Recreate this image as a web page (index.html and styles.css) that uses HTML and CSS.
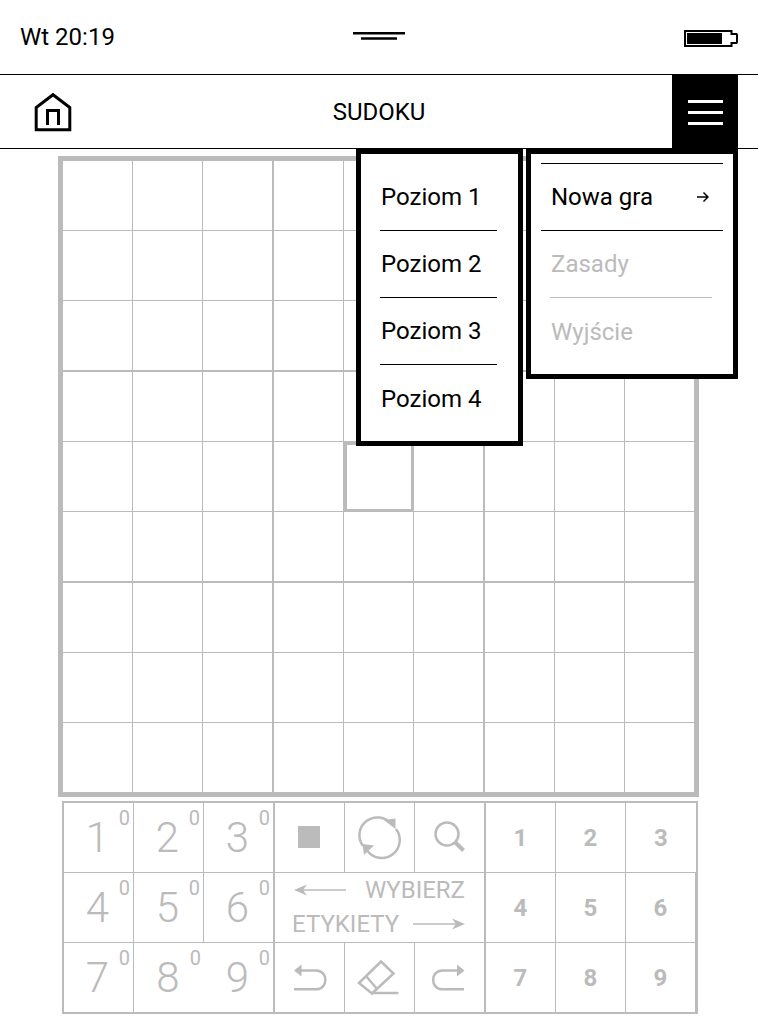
FILE: index.html
```html
<!DOCTYPE html>
<html lang="pl">
<head>
<meta charset="utf-8">
<title>Sudoku</title>
<link rel="stylesheet" href="styles.css">
</head>
<body>
<header class="status">
  <span class="clock">Wt 20:19</span>
  <svg class="grip" viewBox="353 32 52 10"><path d="M353 34.2H405M361 39.5H397"/></svg>
  <svg class="battery" viewBox="684 30 54 17"><path class="batt-line" d="M685 31H731.5V34H736.5L737 35V42L736.5 43H731.5V46H685Z"/><rect class="batt-fill" x="687" y="33" width="35" height="11"/></svg>
</header>
<nav class="nav">
  <svg class="home" viewBox="34 92 38 40"><path d="M36.2 129.8V107.5L53 94.7L69.8 107.5V129.8Z"/><path d="M47.5 125V110.5H58.5V125"/></svg>
  <div class="title">SUDOKU</div>
  <div class="burger"><i></i><i></i><i></i></div>
</nav>
<main class="main">
  <section class="board">
    <div class="c"></div><div class="c"></div><div class="c"></div><div class="c"></div><div class="c"></div><div class="c"></div><div class="c"></div><div class="c"></div><div class="c"></div>
    <div class="c"></div><div class="c"></div><div class="c"></div><div class="c"></div><div class="c"></div><div class="c"></div><div class="c"></div><div class="c"></div><div class="c"></div>
    <div class="c"></div><div class="c"></div><div class="c"></div><div class="c"></div><div class="c"></div><div class="c"></div><div class="c"></div><div class="c"></div><div class="c"></div>
    <div class="c"></div><div class="c"></div><div class="c"></div><div class="c"></div><div class="c"></div><div class="c"></div><div class="c"></div><div class="c"></div><div class="c"></div>
    <div class="c"></div><div class="c"></div><div class="c"></div><div class="c"></div><div class="c sel"></div><div class="c"></div><div class="c"></div><div class="c"></div><div class="c"></div>
    <div class="c"></div><div class="c"></div><div class="c"></div><div class="c"></div><div class="c"></div><div class="c"></div><div class="c"></div><div class="c"></div><div class="c"></div>
    <div class="c"></div><div class="c"></div><div class="c"></div><div class="c"></div><div class="c"></div><div class="c"></div><div class="c"></div><div class="c"></div><div class="c"></div>
    <div class="c"></div><div class="c"></div><div class="c"></div><div class="c"></div><div class="c"></div><div class="c"></div><div class="c"></div><div class="c"></div><div class="c"></div>
    <div class="c"></div><div class="c"></div><div class="c"></div><div class="c"></div><div class="c"></div><div class="c"></div><div class="c"></div><div class="c"></div><div class="c"></div>
  </section>
  <section class="keys">
    <div class="k d">1<sup>0</sup></div><div class="k d">2<sup>0</sup></div><div class="k d g">3<sup>0</sup></div>
    <div class="k"><svg viewBox="275 803 69 69"><rect class="solid" x="298" y="826" width="22" height="22"/></svg></div>
    <div class="k"><svg viewBox="345 803 69 69"><path d="M363 846A17.5 17.5 0 0 1 391.5 824.5M396 829A17.5 17.5 0 0 1 367.5 851"/><path class="solid" d="M384 820L395.500 818.500L395.500 829ZM362.500 844L374 845.500L364 855Z"/></svg></div>
    <div class="k g"><svg viewBox="415 803 69 69"><circle cx="447" cy="834" r="11.500"/><path class="thick" d="M455.500 842.500L463.500 850.500"/></svg></div>
    <div class="k n">1</div><div class="k n">2</div><div class="k n">3</div>

    <div class="k d">4<sup>0</sup></div><div class="k d">5<sup>0</sup></div><div class="k d g">6<sup>0</sup></div>
    <div class="k wide">
      <div class="lab"><svg class="arr" viewBox="0 0 52 12"><path d="M6 6H52"/><path class="solid" d="M0 6L13 0.500L9 6L13 11.500Z"/></svg><span>WYBIERZ</span></div>
      <div class="lab"><span>ETYKIETY</span><svg class="arr" viewBox="0 0 52 12"><path d="M0 6H46"/><path class="solid" d="M52 6L39 0.500L43 6L39 11.500Z"/></svg></div>
    </div>
    <div class="k n">4</div><div class="k n">5</div><div class="k n">6</div>

    <div class="k d">7<sup>0</sup></div><div class="k d">8<sup>0</sup></div><div class="k d g">9<sup>0</sup></div>
    <div class="k"><svg viewBox="275 943 69 69"><path d="M300 970.500H316C328.500 970.500 328.500 989.300 316 989.300H294"/><path class="solid" d="M294 970.500L301.500 964.500V976.500Z"/></svg></div>
    <div class="k"><svg viewBox="345 943 69 69"><path d="M381 961.500L393.500 973.500L372 993.500L359 983Z"/><path d="M366.500 976.500L377 989M372 993H398.500"/></svg></div>
    <div class="k g"><svg viewBox="415 943 69 69"><path d="M458 970.500H442.500C430 970.500 430 989.300 442.500 989.300H464"/><path class="solid" d="M464.500 970.500L457 964.500V976.500Z"/></svg></div>
    <div class="k n">7</div><div class="k n">8</div><div class="k n">9</div>
  </section>
</main>
<div class="menus">
  <ul class="menu levels">
    <li>Poziom 1</li>
    <li>Poziom 2</li>
    <li>Poziom 3</li>
    <li>Poziom 4</li>
  </ul>
  <ul class="menu actions">
    <li class="active">Nowa gra<svg class="sub" viewBox="0 0 12 12"><path d="M0 6H11M6.500 1.500L11 6L6.500 10.500"/></svg></li>
    <li class="off">Zasady</li>
    <li class="off">Wyjście</li>
  </ul>
</div>
</body>
</html>
```
FILE: styles.css
```css
* { box-sizing: border-box; }
html, body { margin: 0; padding: 0; }
body {
  width: 758px;
  height: 1024px;
  position: relative;
  overflow: hidden;
  background: #fff;
  color: #000;
  font-family: Roboto, "Noto Sans", sans-serif;
  font-size: 24px;
}
.status {
  height: 75px;
  border-bottom: 1px solid #000;
  display: grid;
  grid-template-columns: 1fr auto 1fr;
  align-items: center;
  padding: 0 20px;
}
.clock { line-height: 74px; }
.grip { width: 52px; height: 10px; margin-top: -1px; margin-bottom: 1px; }
.grip path { fill: none; stroke: #000; stroke-width: 2.5; }
.battery { width: 54px; height: 17px; justify-self: end; margin-top: 2px; }
.batt-line { fill: none; stroke: #000; stroke-width: 2; }
.batt-fill { fill: #000; }

.nav {
  height: 74px;
  border-bottom: 1px solid #000;
  display: grid;
  grid-template-columns: 1fr auto 1fr;
  align-items: stretch;
}
.home { width: 38px; height: 40px; margin: 17px 0 0 34px; }
.home path { fill: none; stroke: #000; stroke-width: 3; }
.title { line-height: 74px; }
.burger {
  justify-self: end;
  width: 66px;
  height: 74px;
  margin-right: 20px;
  background: #000;
  display: flex;
  flex-direction: column;
  gap: 8px;
  align-items: center;
  padding-top: 25px;
}
.burger i { display: block; width: 35px; height: 3px; background: #fff; }

.main { padding-top: 7px; }
.board {
  margin-left: 58px;
  width: 641px;
  height: 641px;
  border: 5px solid #bbb;
  display: grid;
  grid-template-columns: 70px 70px 71px 70px 70px 71px 70px 70px 69px;
  grid-template-rows: 70px 70px 71px 70px 70px 71px 70px 70px 69px;
}
.c { border-right: 1px solid #bbb; border-bottom: 1px solid #bbb; }
.c:nth-child(3n) { border-right-width: 2px; }
.c:nth-child(9n) { border-right: 0; }
.c:nth-child(n+19):nth-child(-n+27),
.c:nth-child(n+46):nth-child(-n+54) { border-bottom-width: 2px; }
.c:nth-child(n+73) { border-bottom: 0; }
.c.sel { border: 3px solid #bbb; }

.keys {
  margin: 4px 0 0 62px;
  width: 636px;
  height: 213px;
  border: 2px solid #bbb;
  display: grid;
  grid-template-columns: 70px 70px 71px 70px 70px 71px 70px 70px 70px;
  grid-template-rows: 70px 70px 69px;
  color: #bbb;
}
.k {
  position: relative;
  border-right: 1px solid #bbb;
  border-bottom: 1px solid #bbb;
  display: flex;
  align-items: center;
  justify-content: center;
}
.k.g { border-right-width: 2px; }
.k:nth-child(9n) { border-right: 0; }
.k:nth-last-child(-n+9) { border-bottom: 0; }
.k.d { font-size: 42px; font-weight: 300; padding-right: 2px; }
.k sup {
  position: absolute;
  top: 4px;
  right: 3px;
  font-size: 20px;
  line-height: 22px;
  font-weight: 400;
}
.k.n { font-weight: 700; font-size: 24px; }
.k svg { width: 69px; height: 69px; align-self: flex-start; justify-self: flex-start; fill: none; stroke: #bbb; stroke-width: 2.5; }
.k svg .solid { fill: #bbb; stroke: none; }
.k svg .thick { stroke-width: 4; }
.k.wide {
  grid-column: 4 / span 3;
  flex-direction: column;
  align-items: stretch;
  justify-content: flex-start;
  padding: 0 19px 0 17px;
  border-right-width: 2px;
  font-size: 24px;
  line-height: 34px;
}
.lab { display: flex; align-items: center; justify-content: space-between; height: 34px; }
.k.wide svg.arr { width: 52px; height: 12px; align-self: center; stroke-width: 1.500; }
.k.wide .lab:first-child { margin-top: 0; padding-left: 2px; }

.menus {
  position: absolute;
  left: 356px;
  top: 148px;
  display: flex;
  gap: 3px;
  align-items: flex-start;
}
.menu {
  list-style: none;
  margin: 0;
  background: #fff;
  border: 5px solid #000;
  border-top-width: 6px;
}
.menu li {
  height: 67px;
  line-height: 66px;
  border-bottom: 1px solid #000;
  display: flex;
  align-items: center;
}
.levels { width: 167px; height: 298px; padding: 10px 21px 0 19px; }
.levels li { padding-left: 1px; }
.levels li:last-child { border-bottom: 0; }
.actions { width: 212px; height: 231px; padding: 9px 10px 0; }
.actions .active { height: 68px; border-top: 1px solid #000; padding: 0 10px; justify-content: space-between; }
.actions .off { color: #bbb; margin: 0 11px 0 9px; padding-left: 1px; border-bottom: 1px solid #bbb; }
.actions .off:last-child { border-bottom: 0; }
.sub { width: 12px; height: 12px; margin-right: 4px; fill: none; stroke: #000; stroke-width: 1.500; }
```
